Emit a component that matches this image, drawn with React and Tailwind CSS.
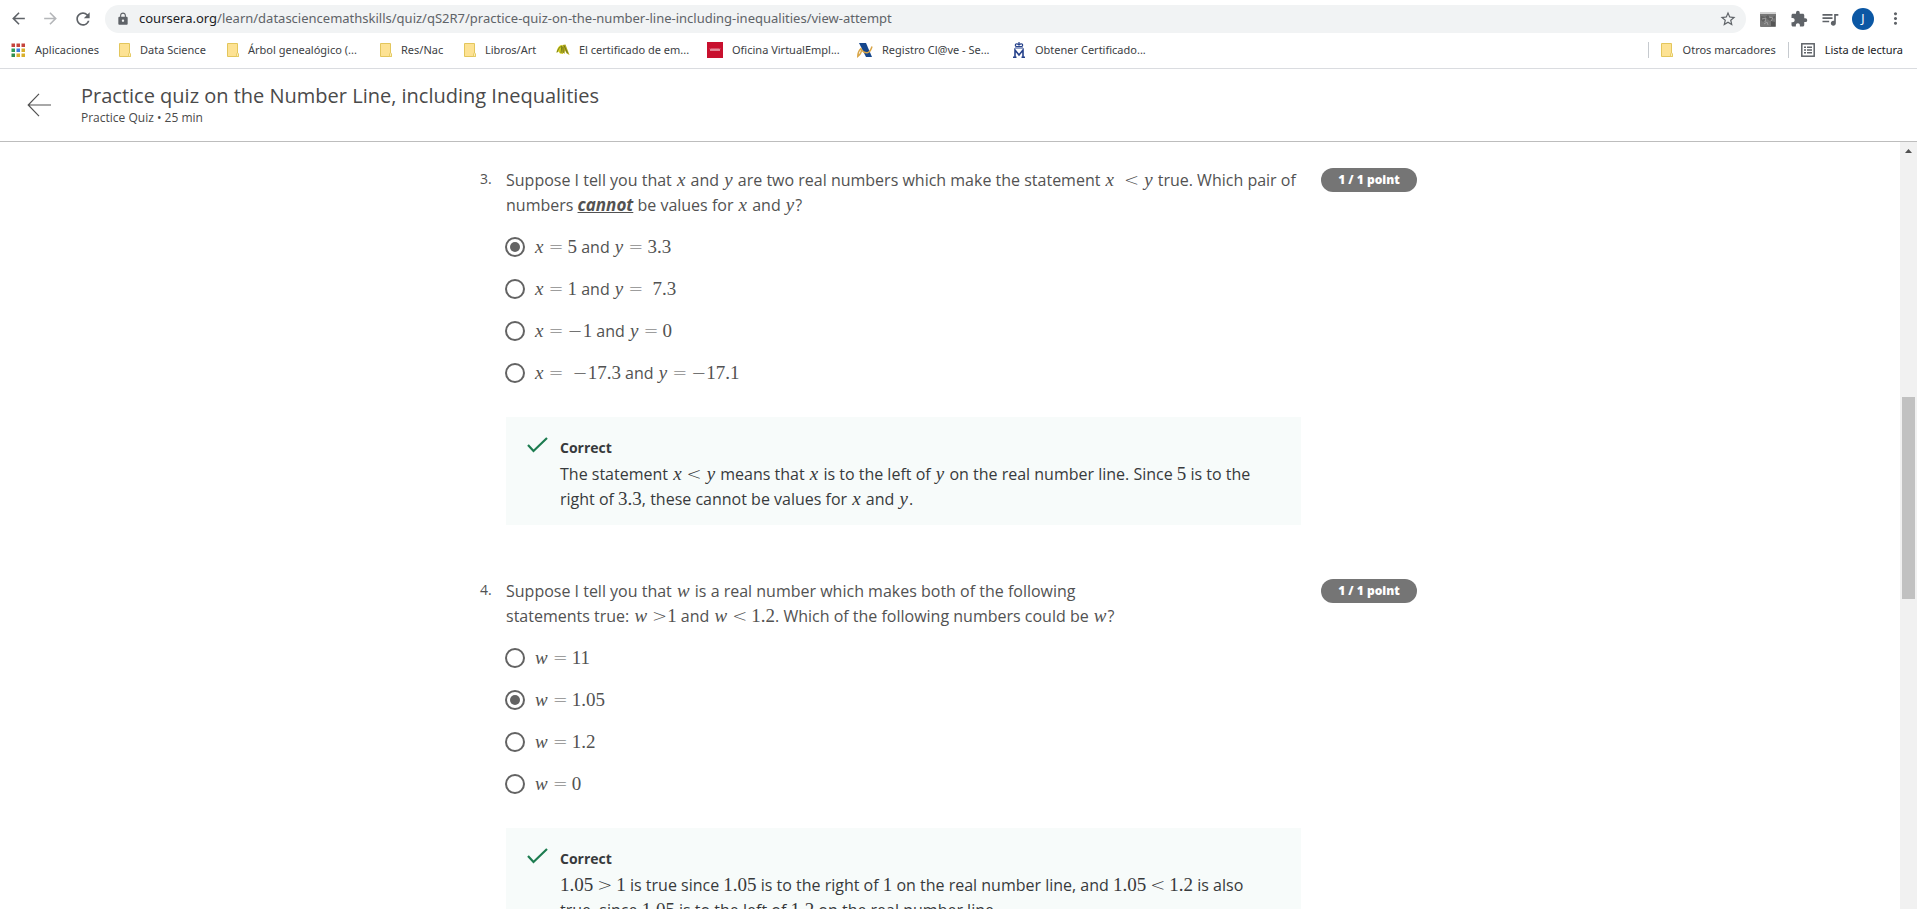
import React from "react";
import {
  MdArrowBack, MdArrowForward, MdRefresh, MdLock, MdStarBorder,
  MdExtension, MdQueueMusic, MdMoreVert,
} from "react-icons/md";

const V = ({ children }) => (
  <i className="mx-px font-['Liberation_Serif',serif] text-[19px] leading-none">{children}</i>
);
const N = ({ children }) => (
  <span className="font-['Liberation_Serif',serif] text-[19px] leading-none">{children}</span>
);
const Op = ({ children, tight }) => (
  <span className={`font-['DejaVu_Sans',sans-serif] text-[18px] font-extralight leading-none ${tight ? "ml-1" : "mx-1"}`}>{children}</span>
);
const Neg = () => (
  <span className="font-['DejaVu_Sans',sans-serif] text-[18px] font-extralight leading-none">−</span>
);
const Gap = () => <span className="inline-block w-[5px]" />;

function FolderIcon() {
  return (
    <svg width="12" height="16" viewBox="0 0 12 16" aria-hidden="true">
      <path d="M.5 1.5h10v10l1 .8v2.2H.5z" fill="#fde293" stroke="#e3c65c" />
      <path d="M9.5 14.5v-2.7l1-1 1 1v2.7z" fill="#fdeeb5" stroke="#e3c65c" strokeWidth=".8" />
    </svg>
  );
}

function AppsIcon() {
  const colors = ["#c5443c", "#c5443c", "#c5443c", "#2f9e58", "#3e7de0", "#d9b02c", "#2f8e50", "#d9b02c", "#d9b02c"];
  return (
    <svg width="14" height="14" viewBox="0 0 14 14" aria-hidden="true">
      {colors.map((c, i) => (
        <rect key={i} x={(i % 3) * 5 + 0.5} y={Math.floor(i / 3) * 5 + 0.5} width="3.500" height="3.500" fill={c} />
      ))}
    </svg>
  );
}

function LeafIcon() {
  return (
    <svg width="14" height="12" viewBox="0 0 14 12" aria-hidden="true">
      <path d="M.5 8.500C1 4.500 3 1.200 5.500 1L8 2.500 7 10 4 9.500 2.500 7.500z" fill="#d3cd22" />
      <path d="M6.500 1l3-.5L13.500 11l-2.800-1.500L9 6.500 8.500 10 6.500 8z" fill="#b3a91d" />
      <path d="M1 8.500C2 5 4 2.500 5.800 2.200L5 9M8 1.500l3.500 7.500M6.800 3l.4 6" fill="none" stroke="#5f6a1c" strokeWidth=".8" />
    </svg>
  );
}

function MadridIcon() {
  return (
    <svg width="16" height="16" viewBox="0 0 16 16" aria-hidden="true">
      <rect width="16" height="16" fill="#c8102e" />
      <path d="M3 6.500l1 2.500 1-2.500 1 2.500 1-2.500M7 6.500l1 2.500 1-2.500 1 2.500 1-2.500 1 2.500 1-2.500" fill="none" stroke="#fff" strokeOpacity=".7" strokeWidth=".8" />
    </svg>
  );
}

function TaxIcon() {
  return (
    <svg width="16" height="16" viewBox="0 0 16 16" aria-hidden="true">
      <path d="M2 1h7l6 14H9z" fill="#15468c" />
      <path d="M.8 14.500c0-3.500 1-6 3.200-8 1.500 2-.5 6-3.200 8zM5 8.500c4 4 8 3 10-4" fill="none" stroke="#d9a648" strokeWidth="1.500" />
    </svg>
  );
}

function MintIcon() {
  return (
    <svg width="14" height="16" viewBox="0 0 14 16" aria-hidden="true">
      <path d="M7 0v2M4 4.500C2 2 5 1 7 3c2-2 5-1 3 1.500z" fill="none" stroke="#26428b" strokeWidth="1.200" />
      <path d="M3 6h8" stroke="#26428b" strokeWidth="1" />
      <path d="M3 15V8l4 5 4-5v7M1 15.300h3.500M9.500 15.300H13" fill="none" stroke="#26428b" strokeWidth="1.600" />
    </svg>
  );
}

function ListIcon() {
  return (
    <svg width="14" height="14" viewBox="0 0 14 14" fill="none" stroke="#5f6368" aria-hidden="true">
      <rect x=".8" y=".8" width="12.400" height="12.400" strokeWidth="1.500" />
      <path d="M3 4.200h2M6 4.200h5M3 7h2M6 7h5M3 9.800h2M6 9.800h5" strokeWidth="1.400" />
    </svg>
  );
}

function ExtensionPicture() {
  return (
    <svg width="16" height="16" viewBox="0 0 16 16" aria-hidden="true">
      <rect y="1" width="16" height="15" rx="1" fill="#777" />
      <rect y="1" width="16" height="2" fill="#d2d2d2" />
      <path d="M1 5l4 1 3-2 2 3 5-2v2l-5 3-3-2-4 3-2-2z" fill="#606060" />
      <path d="M2 8l4-1-1 4M9 6l4 1-2 3M4 13l3-2 1 3" stroke="#a8a8a8" strokeWidth=".8" fill="none" />
      <path d="M11 10l4 1v4h-4z" fill="#555" />
    </svg>
  );
}

const bookmarks = [
  { icon: FolderIcon, label: "Data Science", width: "w-[108px]" },
  { icon: FolderIcon, label: "Árbol genealógico (...", width: "w-[153px]" },
  { icon: FolderIcon, label: "Res/Nac", width: "w-[84px]" },
  { icon: FolderIcon, label: "Libros/Art", width: "w-[92px]" },
  { icon: LeafIcon, label: "El certificado de em...", width: "w-[151px]" },
  { icon: MadridIcon, label: "Oficina VirtualEmpl...", width: "w-[150px]" },
  { icon: TaxIcon, label: "Registro Cl@ve - Se...", width: "w-[155px]" },
  { icon: MintIcon, label: "Obtener Certificado...", width: "w-[150px]" },
];

function BrowserChrome() {
  return (
    <div className="shrink-0 border-b border-[#dadce0] font-['Noto_Sans',sans-serif]">
      <div className="flex h-[37px] items-center pl-[9px] pr-3 text-[#5f6368]">
        <button aria-label="Atrás" className="w-8"><MdArrowBack size={19} /></button>
        <button aria-label="Adelante" className="w-8 text-[#b4b6b9]"><MdArrowForward size={19} /></button>
        <button aria-label="Recargar" className="w-8"><MdRefresh size={20} /></button>
        <div className="flex h-7 flex-1 items-center rounded-full bg-[#f1f3f4] pr-[9px] pl-[11px]">
          <MdLock size={14} />
          <p className="ml-[9px] flex-1 whitespace-nowrap text-[13px]">
            <span className="text-[#202124]">coursera.org</span>/learn/datasciencemathskills/quiz/qS2R7/practice-quiz-on-the-number-line-including-inequalities/view-attempt
          </p>
          <button aria-label="Añadir a marcadores"><MdStarBorder size={18} /></button>
        </div>
        <div className="ml-[14px] flex items-center gap-3">
          <button aria-label="Extensión" className="w-[18px]"><ExtensionPicture /></button>
          <button aria-label="Extensiones"><MdExtension size={18} /></button>
          <button aria-label="Control multimedia"><MdQueueMusic size={20} /></button>
          <button aria-label="Perfil" className="size-[22px] rounded-full bg-[#0b57a4] text-xs text-white">J</button>
          <button aria-label="Menú"><MdMoreVert size={19} /></button>
        </div>
      </div>
      <nav className="flex h-[31px] items-start pl-[11px] pr-[14px] text-[11px] leading-[26px] text-[#3c4043]">
        <a href="#apps" className="flex w-[108px] items-center gap-[10px] whitespace-nowrap"><AppsIcon />Aplicaciones</a>
        {bookmarks.map(({ icon: Icon, label, width }) => (
          <a key={label} href="#bookmark" className={`flex shrink-0 items-center gap-[9px] whitespace-nowrap ${width}`}>
            <Icon />{label}
          </a>
        ))}
        <div className="ml-auto flex items-center gap-3 whitespace-nowrap">
          <span className="h-4 w-px bg-[#c6cacf]" />
          <a href="#otros" className="flex items-center gap-[10px]"><FolderIcon />Otros marcadores</a>
          <span className="h-4 w-px bg-[#c6cacf]" />
          <a href="#lista" className="flex items-center gap-[10px] text-[#202124]"><ListIcon />Lista de lectura</a>
        </div>
      </nav>
    </div>
  );
}

function Question({ number, prompt, options, checked, feedback }) {
  return (
    <section className="grid grid-cols-[26px_1fr_96px] pb-[54px]">
      <span className="text-sm leading-[22px]">{number}.</span>
      <fieldset className="min-w-0">
        <legend className="leading-[25px]">{prompt}</legend>
        <div className="pt-2">
          {options.map((option, i) => (
            <label key={i} className="flex h-[42px] items-center gap-[9px]">
              <input
                type="radio"
                name={`question-${number}`}
                defaultChecked={i === checked}
                className="-ml-px size-5 shrink-0 appearance-none rounded-full border-2 border-[#636363] bg-white bg-clip-content p-[3px] checked:bg-[#636363]"
              />
              <span className="whitespace-nowrap leading-6">{option}</span>
            </label>
          ))}
        </div>
        <div className="mt-[23px] mr-5 flex gap-3 bg-[#f7fbfa] pt-4 pr-[22px] pb-[13px] pl-[21px] text-[#373a3c]">
          <svg width="21" height="18" viewBox="0 0 21 18" className="mt-[3px] shrink-0" aria-hidden="true">
            <path d="M1 9l5.500 6L20 2" fill="none" stroke="#1d7c50" strokeWidth="2.200" />
          </svg>
          <div className="min-w-0">
            <h2 className="text-sm leading-[29px] font-bold">Correct</h2>
            <p className="leading-[25px]">{feedback}</p>
          </div>
        </div>
      </fieldset>
      <span className="h-6 rounded-full bg-[#757575] text-center text-xs leading-6 font-extrabold text-white">1 / 1 point</span>
    </section>
  );
}

export default function App() {
  return (
    <div className="flex h-screen flex-col bg-white font-['Open_Sans',sans-serif] text-base text-[#525252]">
      <BrowserChrome />
      <header className="flex h-[73px] shrink-0 items-center border-b border-[#bdbdbd] pl-[27px] text-[#4a4a4a]">
        <button aria-label="Volver" className="mr-[30px]">
          <svg width="24" height="24" viewBox="0 0 24 24" fill="none" stroke="#525252" strokeWidth="1.200">
            <path d="M24 12H1.500M12 .8L1.200 12 12 23.200" />
          </svg>
        </button>
        <div className="pb-[2px]">
          <h1 className="text-xl leading-7">Practice quiz on the Number Line, including Inequalities</h1>
          <p className="text-xs leading-4">Practice Quiz • 25 min</p>
        </div>
      </header>
      <div className="flex min-h-0 flex-1">
        <main className="flex-1 overflow-hidden">
          <div className="mx-auto max-w-[940px] pt-[26px] pr-[3px]">
            <Question
              number={3}
              prompt={<>Suppose I tell you that <V>x</V> and <V>y</V> are two real numbers which make the statement <V>x</V><Gap /><Op>&lt;</Op><V>y</V> true. Which pair of<br />numbers <strong className="text-[17px] leading-none italic underline">cannot</strong> be values for <V>x</V> and <V>y</V>?</>}
              checked={0}
              options={[
                <><V>x</V><Op>=</Op><N>5</N> and <V>y</V><Op>=</Op><N>3.3</N></>,
                <><V>x</V><Op>=</Op><N>1</N> and <V>y</V><Op>=</Op><Gap /><N>7.3</N></>,
                <><V>x</V><Op>=</Op><Neg /><N>1</N> and <V>y</V><Op>=</Op><N>0</N></>,
                <><V>x</V><Op>=</Op><Gap /><Neg /><N>17.3</N> and <V>y</V><Op>=</Op><Neg /><N>17.1</N></>,
              ]}
              feedback={<>The statement <V>x</V><Op>&lt;</Op><V>y</V> means that <V>x</V> is to the left of <V>y</V> on the real number line. Since <N>5</N> is to the<br />right of <N>3.3</N>, these cannot be values for <V>x</V> and <V>y</V>.</>}
            />
            <Question
              number={4}
              prompt={<>Suppose I tell you that <V>w</V> is a real number which makes both of the following<br />statements true: <V>w</V><Op tight>&gt;</Op><N>1</N> and <V>w</V><Op>&lt;</Op><N>1.2</N>. Which of the following numbers could be <V>w</V>?</>}
              checked={1}
              options={["11", "1.05", "1.2", "0"].map((n) => <><V>w</V><Op>=</Op><N>{n}</N></>)}
              feedback={<><N>1.05</N><Op>&gt;</Op><N>1</N> is true since <N>1.05</N> is to the right of <N>1</N> on the real number line, and <N>1.05</N><Op>&lt;</Op><N>1.2</N> is also<br />true, since <N>1.05</N> is to the left of <N>1.2</N> on the real number line.</>}
            />
          </div>
        </main>
        <div className="flex w-[17px] shrink-0 flex-col items-center bg-[#f1f1f1]" aria-hidden="true">
          <svg width="17" height="17" viewBox="0 0 17 17"><path d="M5 11l3.500-4 3.500 4z" fill="#505050" /></svg>
          <div className="basis-[238px]" />
          <div className="h-[202px] w-[13px] bg-[#c1c1c1]" />
        </div>
      </div>
    </div>
  );
}
